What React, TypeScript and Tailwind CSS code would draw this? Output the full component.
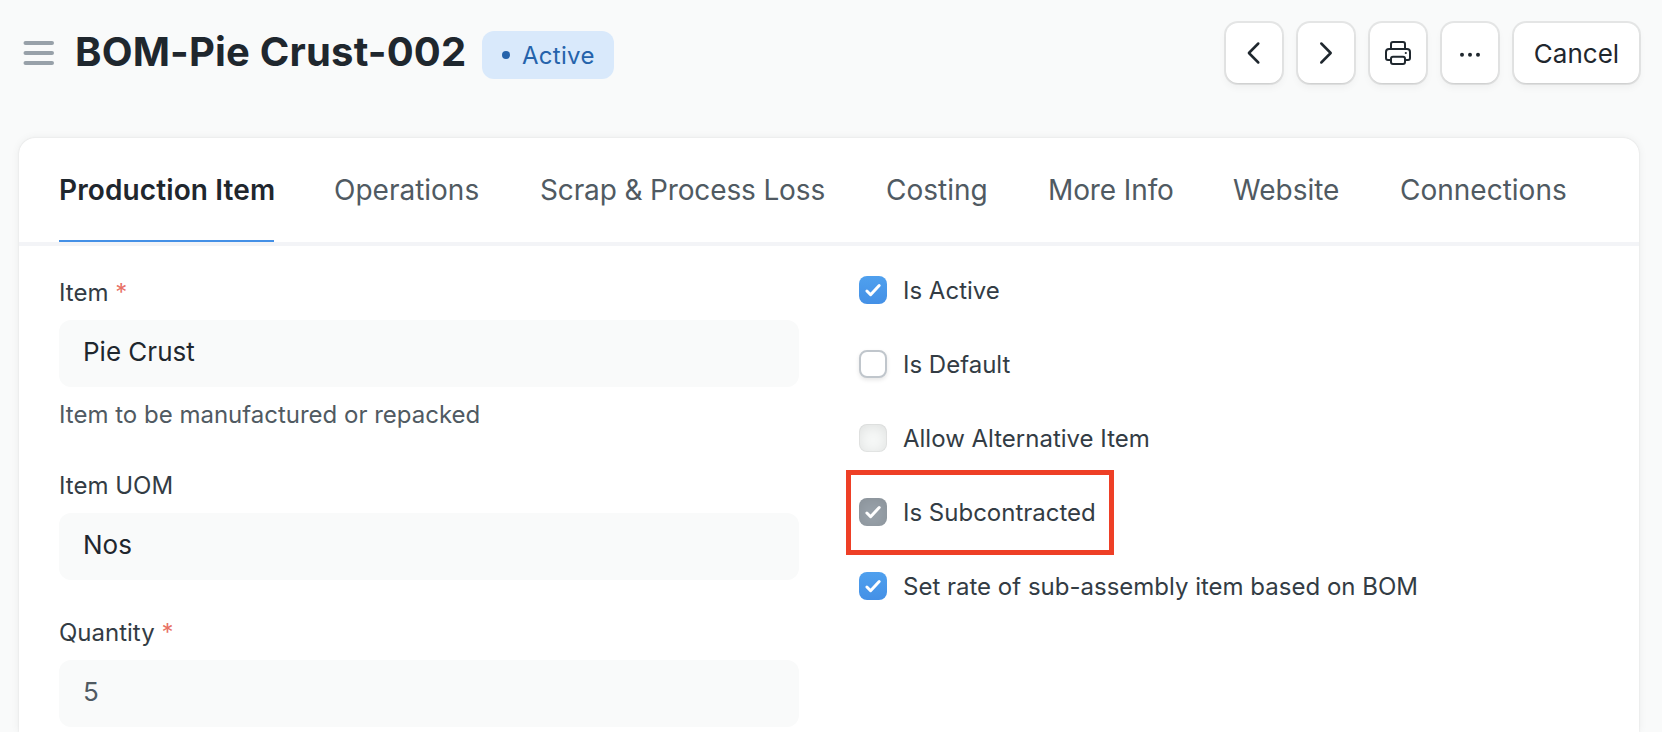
import { ReactNode } from "react";

const tabs: { label: string; width: string }[] = [
  { label: "Operations", width: "w-[145px]" },
  { label: "Scrap & Process Loss", width: "w-[285px] tracking-[-0.005em]" },
  { label: "Costing", width: "w-[101px]" },
  { label: "More Info", width: "w-[124px] tracking-[-0.004em]" },
  { label: "Website", width: "w-[106px]" },
  { label: "Connections", width: "w-[166px]" },
];

function ToolButton({ children, wide }: { children: ReactNode; wide?: boolean }) {
  return (
    <button
      className={`flex h-[60px] items-center justify-center rounded-[12px] bg-white text-[26px] leading-[36px] text-[#1f272e] shadow-[0_1px_0_0_rgba(0,0,0,0.05),0_0_0_2px_rgba(0,0,0,0.08),0_4px_8px_0_rgba(0,0,0,0.05)] ${wide ? "w-[125px] pt-[2px]" : "w-[56px]"}`}
    >
      {children}
    </button>
  );
}

function Field({ label, required, value, muted, help }: { label: string; required?: boolean; value: string; muted?: boolean; help?: string }) {
  return (
    <div className="flex flex-col">
      <div className="h-[36px] text-[24px] leading-[36px] text-[#333c44]">
        {label}
        {required && <span className="text-[#e24c3c]/80"> *</span>}
      </div>
      <div
        className={`mt-[9px] h-[67px] rounded-[12px] bg-[#f9fafa] pl-[24px] text-[26px] leading-[63px] ${muted ? "text-[#505a62]" : "text-[#1f272e]"}`}
      >
        {value}
      </div>
      {help && <div className="mt-[10px] h-[36px] text-[24px] leading-[36px] text-[#505a62]">{help}</div>}
    </div>
  );
}

type BoxState = "checked" | "empty" | "disabled" | "disabled-checked";

const boxStyles: Record<BoxState, string> = {
  checked: "bg-gradient-to-b from-[#4fa0ee] to-[#4490e6]",
  empty: "bg-white border-2 border-[#c0c6cc] shadow-[0_2px_4px_rgba(0,0,0,0.1)]",
  disabled: "bg-[#f6f8f7] shadow-[inset_0_2px_14px_rgba(0,0,0,0.1),inset_0_0_0_1px_rgba(0,0,0,0.04)]",
  "disabled-checked": "bg-[#98a1a9] shadow-[inset_0_2px_14px_rgba(0,0,0,0.1)]",
};

function Check({ label, state }: { label: string; state: BoxState }) {
  return (
    <div className="flex h-[28px] items-center">
      <span className={`flex size-[28px] shrink-0 items-center justify-center rounded-[8px] ${boxStyles[state]}`}>
        {(state === "checked" || state === "disabled-checked") && (
          <svg width="28" height="28" viewBox="0 0 28 28" fill="none" stroke="#fff" strokeWidth="3" strokeLinecap="round" strokeLinejoin="round">
            <path d="M7.9 15 11.6 18.7 20.2 9.5" />
          </svg>
        )}
      </span>
      <span className="ml-[16px] pt-[2px] text-[24px] leading-[28px] whitespace-nowrap text-[#333c44]">{label}</span>
    </div>
  );
}

export default function App() {
  return (
    <div className="flex h-[732px] w-[1662px] flex-col overflow-hidden bg-[#f9fafa] font-['Inter',sans-serif]">
      <header className="flex h-[138px] shrink-0 items-start pr-[23px] pl-[23px]">
        <svg className="mt-[37px] shrink-0" width="32" height="32" viewBox="0 0 32 32" stroke="#98a1a9" strokeWidth="4" strokeLinecap="round">
          <path d="M2.5 6H29M2.5 16H29M2.5 26H29" />
        </svg>
        <h1 className="mt-[22px] ml-[20px] w-[390px] text-[40px] leading-[60px] font-bold tracking-[0.0045em] whitespace-nowrap text-[#1f272e]">BOM-Pie Crust-002</h1>
        <div className="mt-[31px] ml-[17px] flex h-[48px] w-[132px] items-center rounded-[12px] bg-[#d9e9fb] pt-[2px] pl-[20px] text-[24px] tracking-[0.012em] text-[#2563ab]">
          <span className="mt-[-2px] mr-[12px] size-[8px] rounded-full bg-[#2563ab]" />
          Active
        </div>
        <div className="mt-[23px] ml-auto flex gap-[16px]">
          <ToolButton>
            <svg width="32" height="32" viewBox="0 0 32 32" fill="none" stroke="#1f272e" strokeWidth="2.5" strokeLinecap="round" strokeLinejoin="round">
              <path d="M20.3 6.5 10.9 16 20.3 25.5" />
            </svg>
          </ToolButton>
          <ToolButton>
            <svg width="32" height="32" viewBox="0 0 32 32" fill="none" stroke="#1f272e" strokeWidth="2.5" strokeLinecap="round" strokeLinejoin="round">
              <path d="M11.3 6.5 20.7 16 11.3 25.5" />
            </svg>
          </ToolButton>
          <ToolButton>
            <svg width="32" height="32" viewBox="0 0 32 32" fill="none" stroke="#1f272e" strokeWidth="2" strokeLinecap="round" strokeLinejoin="round">
              <path d="M9 12V7a2 2 0 0 1 2-2h10a2 2 0 0 1 2 2v5" />
              <path d="M9 23H6a2 2 0 0 1-2-2v-6a3 3 0 0 1 3-3h18a3 3 0 0 1 3 3v6a2 2 0 0 1-2 2h-3" />
              <rect x="9" y="19.7" width="14" height="7.3" rx="2" />
              <circle cx="23.8" cy="16" r="1.1" fill="#1f272e" stroke="none" />
            </svg>
          </ToolButton>
          <ToolButton>
            <svg width="32" height="32" viewBox="0 0 32 32" fill="#1f272e">
              <circle cx="8" cy="17.8" r="2" />
              <circle cx="16" cy="17.8" r="2" />
              <circle cx="24" cy="17.8" r="2" />
            </svg>
          </ToolButton>
          <ToolButton wide>Cancel</ToolButton>
        </div>
      </header>

      <main className="mr-[23px] ml-[19px] flex grow flex-col rounded-t-[16px] bg-white shadow-[0_0_2px_rgba(0,0,0,0.1),0_0_10px_rgba(0,0,0,0.06)]">
        <nav className="flex h-[108px] shrink-0 items-start border-b-4 border-[#f3f4f7] pl-[40px] text-[28px] leading-[104px] text-[#505a62]">
          <span className="h-[104px] w-[215px] border-b-2 border-[#4490e6] font-semibold tracking-[0.004em] whitespace-nowrap text-[#1f272e]">Production Item</span>
          <div className="ml-[60px] flex gap-[61px]">
            {tabs.map((tab) => (
              <span key={tab.label} className={`${tab.width} whitespace-nowrap`}>
                {tab.label}
              </span>
            ))}
          </div>
        </nav>
        <div className="flex pl-[40px]">
          <section className="flex w-[740px] flex-col pt-[29px]">
            <Field label="Item" required value="Pie Crust" help="Item to be manufactured or repacked" />
            <div className="mt-[35px]">
              <Field label="Item UOM" value="Nos" />
            </div>
            <div className="mt-[35px]">
              <Field label="Quantity" required value="5" muted />
            </div>
          </section>
          <section className="relative ml-[60px] flex flex-col gap-[46px] pt-[30px]">
            <Check label="Is Active" state="checked" />
            <Check label="Is Default" state="empty" />
            <Check label="Allow Alternative Item" state="disabled" />
            <Check label="Is Subcontracted" state="disabled-checked" />
            <Check label="Set rate of sub-assembly item based on BOM" state="checked" />
            <div className="absolute top-[224px] -left-[13px] h-[85px] w-[268px] border-[5px] border-[#ee3f26]" />
          </section>
        </div>
      </main>
    </div>
  );
}
